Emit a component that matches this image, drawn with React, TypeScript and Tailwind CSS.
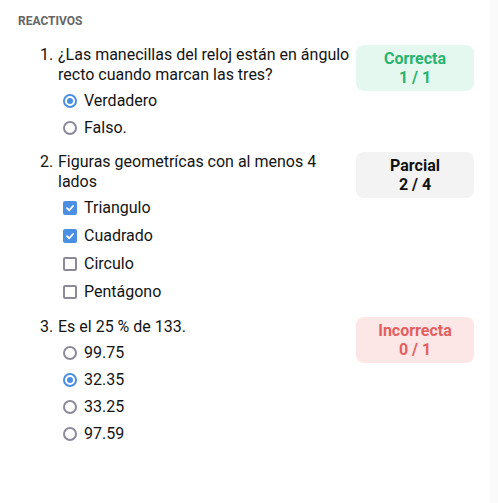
type Opt = { label: string; checked: boolean };
type Q = {
  n: number;
  text: string;
  kind: "radio" | "check";
  options: Opt[];
  status: "ok" | "partial" | "bad";
  title: string;
  score: string;
};

const questions: Q[] = [
  {
    n: 1,
    text: "¿Las manecillas del reloj están en ángulo recto cuando marcan las tres?",
    kind: "radio",
    options: [
      { label: "Verdadero", checked: true },
      { label: "Falso.", checked: false },
    ],
    status: "ok",
    title: "Correcta",
    score: "1 / 1",
  },
  {
    n: 2,
    text: "Figuras geometrícas con al menos 4 lados",
    kind: "check",
    options: [
      { label: "Triangulo", checked: true },
      { label: "Cuadrado", checked: true },
      { label: "Circulo", checked: false },
      { label: "Pentágono", checked: false },
    ],
    status: "partial",
    title: "Parcial",
    score: "2 / 4",
  },
  {
    n: 3,
    text: "Es el 25 % de 133.",
    kind: "radio",
    options: [
      { label: "99.75", checked: false },
      { label: "32.35", checked: true },
      { label: "33.25", checked: false },
      { label: "97.59", checked: false },
    ],
    status: "bad",
    title: "Incorrecta",
    score: "0 / 1",
  },
];

const badgeStyles = {
  ok: "bg-[#e5f8f0] text-[#27b36f]",
  partial: "bg-[#f3f3f3] text-[#111111]",
  bad: "bg-[#fce6e6] text-[#e25f5f]",
};

function Radio({ checked }: { checked: boolean }) {
  return checked ? (
    <span className="w-[14px] h-[14px] rounded-full border-[2px] border-[#4a8fe2] flex items-center justify-center">
      <span className="w-[6px] h-[6px] rounded-full bg-[#4a8fe2]" />
    </span>
  ) : (
    <span className="w-[14px] h-[14px] rounded-full border-[2px] border-[#8c8a99]" />
  );
}

function Check({ checked }: { checked: boolean }) {
  return checked ? (
    <span className="w-[14px] h-[14px] rounded-[2px] bg-[#4a8fe2] flex items-center justify-center">
      <svg width="10" height="10" viewBox="0 0 10 10" fill="none">
        <path d="M2 5.2 L4.2 7.3 L8 3" stroke="white" strokeWidth="1.8" strokeLinecap="round" strokeLinejoin="round" />
      </svg>
    </span>
  ) : (
    <span className="w-[14px] h-[14px] rounded-[2px] border-[2px] border-[#8c8a99]" />
  );
}

export default function App() {
  return (
    <div className="min-h-screen flex bg-[#fafafa] font-['Roboto',sans-serif] text-[#141414]">
      <div className="w-[490px] bg-white pt-[14px]">
        <h2 className="pl-[18px] text-[12px] leading-[15px] font-bold text-[#666666]">REACTIVOS</h2>

        <div className="mt-[16px] pl-[40px] pr-[16px] flex flex-col gap-[11px]">
          {questions.map((q) => (
            <div key={q.n} className="flex">
              <div className="flex-1 flex">
                <span className="w-[18px] text-[16px] leading-[20px]">{q.n}.</span>
                <div className="flex-1 pr-[6px]">
                  <p className="text-[16px] leading-[20px]">{q.text}</p>
                  <ul className="mt-[2px] pl-[5px]">
                    {q.options.map((o) => (
                      <li
                        key={o.label}
                        className={`flex items-center gap-[7px] text-[16px] ${q.kind === "radio" ? "h-[27px]" : "h-[28px]"}`}
                      >
                        {q.kind === "radio" ? <Radio checked={o.checked} /> : <Check checked={o.checked} />}
                        <span>{o.label}</span>
                      </li>
                    ))}
                  </ul>
                </div>
              </div>
              <div
                className={`w-[118px] h-[46px] self-start rounded-[8px] flex flex-col items-center justify-center text-[16px] leading-[19px] font-bold ${badgeStyles[q.status]}`}
              >
                <span>{q.title}</span>
                <span>{q.score}</span>
              </div>
            </div>
          ))}
        </div>
      </div>
    </div>
  );
}
